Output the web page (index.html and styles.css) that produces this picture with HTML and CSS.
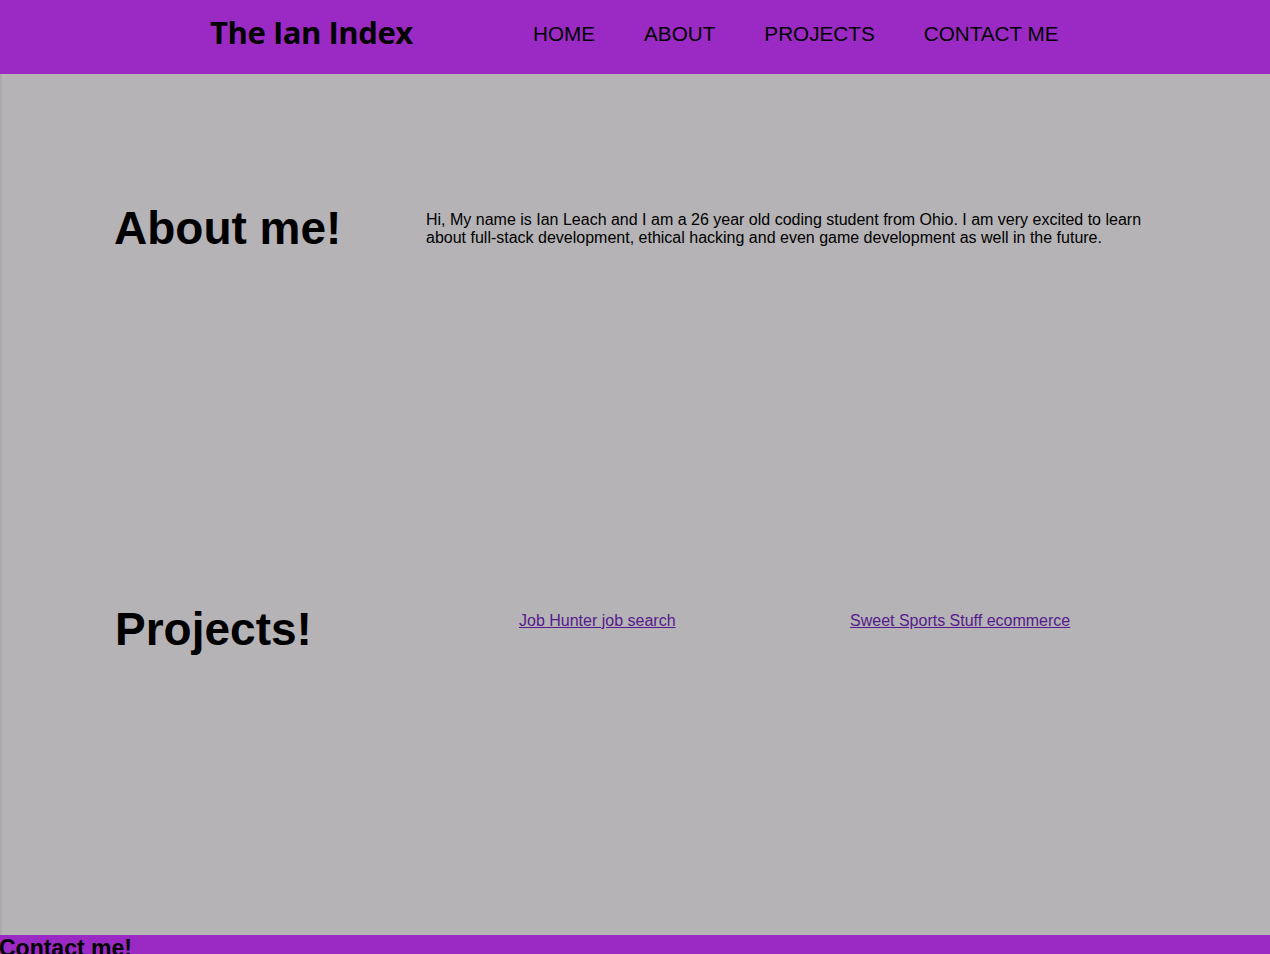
FILE: index.html
```html
<!DOCTYPE html>
<html lang="en">
<head>
<meta charset="utf-8">
<title>The Ian Index</title>
<link rel="stylesheet" href="styles.css">
</head>
<body>
<header class="site-header">
  <h1 class="brand">The Ian Index</h1>
  <nav class="nav">
    <a class="nav-link" href="#">HOME</a>
    <a class="nav-link" href="#about">ABOUT</a>
    <a class="nav-link" href="#projects">PROJECTS</a>
    <a class="nav-link" href="#contact">CONTACT ME</a>
  </nav>
</header>
<main class="main">
  <section class="about" id="about">
    <h2 class="section-title">About me!</h2>
    <p class="about-text">Hi, My name is Ian Leach and I am a 26 year old coding student from Ohio. I am very excited to learn about full-stack development, ethical hacking and even game development as well in the future.</p>
  </section>
  <section class="projects" id="projects">
    <h2 class="section-title">Projects!</h2>
    <a class="project-link" href="#">Job Hunter job search</a>
    <a class="project-link" href="#">Sweet Sports Stuff ecommerce</a>
  </section>
</main>
<footer class="site-footer" id="contact">
  <h2 class="footer-title">Contact me!</h2>
</footer>
</body>
</html>
```

FILE: styles.css
```css
html, body {
  margin: 0;
  padding: 0;
}
body {
  background: #b5b3b6;
  font-family: "Liberation Sans", Arial, sans-serif;
  color: #000;
  overflow: hidden;
  height: 954px;
}
.site-header {
  background: #9b2ac5;
  height: 74px;
  display: flex;
  align-items: flex-start;
  padding-left: 210px;
  box-sizing: border-box;
}
.brand {
  margin: 12px 0 0 0;
  font-family: "Open Sans", "Noto Sans", sans-serif;
  font-weight: 700;
  font-size: 31px;
  line-height: 40px;
  letter-spacing: -0.45px;
  width: 323px;
  white-space: nowrap;
}
.nav {
  display: flex;
  gap: 49px;
  margin-top: 22px;
}
.nav-link {
  color: #000;
  text-decoration: none;
  font-size: 20.7px;
  line-height: 24px;
}
.main {
  height: 861px;
  border-left: 2px solid #acaaad;
  box-sizing: border-box;
}
.about,
.projects {
  display: grid;
  align-items: start;
  height: 401px;
  box-sizing: border-box;
  padding-top: 128px;
}
.about {
  grid-template-columns: 312px 730px;
  padding-left: 112px;
}
.projects {
  grid-template-columns: 404px 331px auto;
  padding-left: 113px;
}
.section-title {
  margin: 0;
  font-size: 46px;
  font-weight: 700;
  line-height: 53px;
}
.about-text {
  margin: 9px 0 0 0;
  font-size: 16px;
  line-height: 18px;
}
.project-link {
  margin-top: 9px;
  font-size: 16px;
  line-height: 18px;
  color: #551a8b;
  justify-self: start;
}
.site-footer {
  background: #9b2ac5;
  height: 40px;
}
.footer-title {
  margin: 0 0 0 -1px;
  font-size: 23px;
  font-weight: 700;
  line-height: 26px;
}
```
